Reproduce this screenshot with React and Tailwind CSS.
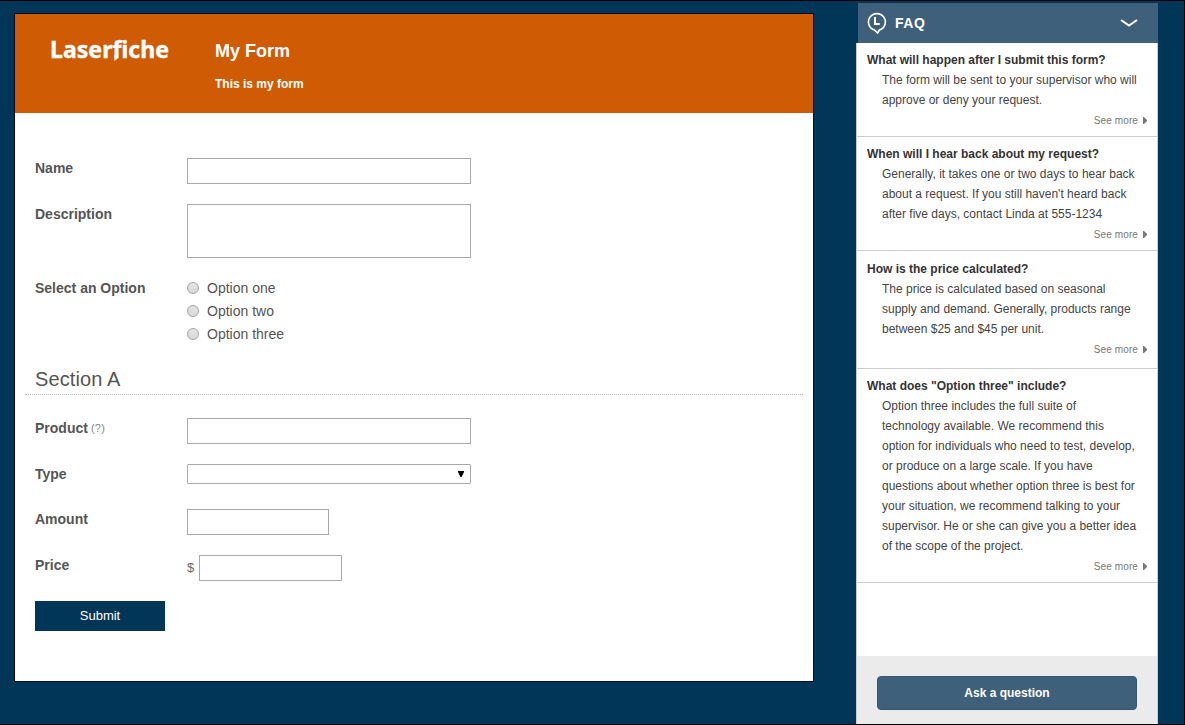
const faqs = [
  {
    question: 'What will happen after I submit this form?',
    lines: ['The form will be sent to your supervisor who will', 'approve or deny your request.'],
    spacing: 'pt-[7px] pb-[6px]',
  },
  {
    question: 'When will I hear back about my request?',
    lines: [
      'Generally, it takes one or two days to hear back',
      "about a request. If you still haven't heard back",
      'after five days, contact Linda at 555-1234',
    ],
    spacing: 'pt-[7px] pb-[6px]',
  },
  {
    question: 'How is the price calculated?',
    lines: [
      'The price is calculated based on seasonal',
      'supply and demand. Generally, products range',
      'between $25 and $45 per unit.',
    ],
    spacing: 'pt-2 pb-[9px]',
  },
  {
    question: 'What does "Option three" include?',
    lines: [
      'Option three includes the full suite of',
      'technology available. We recommend this',
      'option for individuals who need to test, develop,',
      'or produce on a large scale. If you have',
      'questions about whether option three is best for',
      'your situation, we recommend talking to your',
      'supervisor. He or she can give you a better idea',
      'of the scope of the project.',
    ],
    spacing: 'pt-[7px] pb-[6px]',
  },
];

const options = ['Option one', 'Option two', 'Option three'];

function Row({ label, hint, className = '', children }) {
  return (
    <div className={`flex items-start pl-5 ${className}`}>
      <div className="flex w-[152px] shrink-0 text-sm leading-5 font-bold whitespace-nowrap text-[#555]">
        {label}
        {hint && <span className="ml-[3px] text-[11px] font-normal tracking-[0.3px] text-[#888]">{hint}</span>}
      </div>
      {children}
    </div>
  );
}

function TextInput({ className }) {
  return <input type="text" className={`block h-[26px] border border-[#a9a9a9] bg-white px-1 outline-none ${className}`} />;
}

function Logo() {
  return (
    <svg className="block h-10 w-[130px] overflow-visible" viewBox="0 0 130 40" fill="#fff">
      <text x="0" y="24" fontFamily="'Noto Sans', 'Open Sans', sans-serif" fontWeight="700" fontSize="24" textLength="119" lengthAdjust="spacingAndGlyphs" stroke="#fff" strokeWidth="0.4">
        Laserfiche
      </text>
      <path d="M64.4 21h3.6v3l-3.6 3z" />
    </svg>
  );
}

function FormCard() {
  return (
    <main className="mt-3 ml-3.5 h-[669px] w-[800px] shrink-0 border border-[#08062b] bg-white">
      <header className="flex h-[99px] bg-[#d05b05] text-white">
        <div className="w-[200px] pt-5 pl-[35px]">
          <Logo />
        </div>
        <div className="font-bold">
          <h1 className="mt-[25px] text-lg leading-6">My Form</h1>
          <p className="mt-[11px] text-xs leading-5">This is my form</p>
        </div>
      </header>
      <form className="flex flex-col gap-5 pt-[45px]">
        <Row label="Name">
          <TextInput className="w-[284px]" />
        </Row>
        <Row label="Description">
          <textarea className="block h-[54px] w-[284px] resize-none border border-[#a9a9a9] bg-white outline-none" />
        </Row>
        <Row label="Select an Option">
          <div className="flex flex-col gap-[3px]">
            {options.map((option) => (
              <label key={option} className="flex h-5 items-center gap-2 text-sm leading-5 text-[#555]">
                <span className="size-3 rounded-full border border-[#a5a5a5] bg-linear-to-b from-[#e4e4e4] to-[#d9d9d9]" />
                {option}
              </label>
            ))}
          </div>
        </Row>
        <h2 className="mx-2.5 h-[31px] border-b border-dotted border-[#bbb] pl-2.5 text-xl leading-[30px] tracking-[0.1px] text-[#555]">Section A</h2>
        <Row label="Product" hint="(?)" className="mt-[3px]">
          <TextInput className="w-[284px]" />
        </Row>
        <Row label="Type">
          <div className="flex h-5 w-[284px] items-center justify-end rounded-[1px] border border-[#a9a9a9] bg-white pr-1.5">
            <svg className="h-[6px] w-[6px]" viewBox="0 0 6 6">
              <path d="M0 0h6v1L3.5 6h-1L0 1z" />
            </svg>
          </div>
        </Row>
        <Row label="Amount" className="mt-[5px]">
          <TextInput className="w-[142px]" />
        </Row>
        <Row label="Price">
          <span className="w-3 pt-[3px] text-[13px] leading-5 text-[#666]">$</span>
          <TextInput className="w-[143px]" />
        </Row>
        <button type="button" className="ml-5 h-[30px] w-[130px] bg-[#023658] text-[13px] leading-[30px] text-white">
          Submit
        </button>
      </form>
    </main>
  );
}

function FaqPanel() {
  return (
    <aside className="mt-0.5 ml-[42px] flex h-[721px] w-[302px] shrink-0 flex-col">
      <header className="ml-0.5 flex h-10 shrink-0 items-center bg-[#3e607a] text-white">
        <svg className="ml-[9px] h-6 w-5" viewBox="0 0 20 24" fill="none" stroke="#fff">
          <path d="M7.4 19A8.4 8.4 0 1 1 12.4 19L10.6 22z" strokeWidth="1.6" />
          <path d="M8 6v7h4.8" strokeWidth="2" />
        </svg>
        <span className="ml-2 text-sm font-bold tracking-[0.5px]">FAQ</span>
        <svg className="mr-5 ml-auto h-3 w-[18px]" viewBox="0 0 18 12" fill="none" stroke="#fff" strokeWidth="2">
          <path d="M1 3l8 5.6L17 3" />
        </svg>
      </header>
      <div className="flex-1 border-x border-[#ccc] bg-white">
        {faqs.map(({ question, lines, spacing }) => (
          <section key={question} className={`border-b border-[#ccc] pl-2.5 whitespace-nowrap ${spacing}`}>
            <h3 className="text-xs leading-5 font-bold text-[#333]">{question}</h3>
            <div className="pl-[15px] text-xs leading-5 text-[#444]">
              {lines.map((line) => (
                <p key={line}>{line}</p>
              ))}
            </div>
            <div className="flex h-5 items-center justify-end gap-[5px] pr-2.5 text-[10px] text-[#777]">
              <span className="pt-0.5 leading-[18px] tracking-[0.1px]">See more</span>
              <svg className="h-[7px] w-1" viewBox="0 0 4 7" fill="#777">
                <path d="M0 0h1l3 3v1L1 7H0z" />
              </svg>
            </div>
          </section>
        ))}
      </div>
      <footer className="h-[68px] shrink-0 border-x border-[#ccc] bg-[#ebebeb] pt-5 pl-5">
        <button type="button" className="block h-[34px] w-[260px] rounded-[4px] border border-[#345672] bg-[#3e607a] text-xs font-bold text-white">
          Ask a question
        </button>
      </footer>
    </aside>
  );
}

export default function App() {
  return (
    <div className="flex h-[725px] w-[1185px] items-start overflow-hidden border-y border-r border-black bg-[#023658] font-['Liberation_Sans',Arial,sans-serif]">
      <FormCard />
      <FaqPanel />
    </div>
  );
}
